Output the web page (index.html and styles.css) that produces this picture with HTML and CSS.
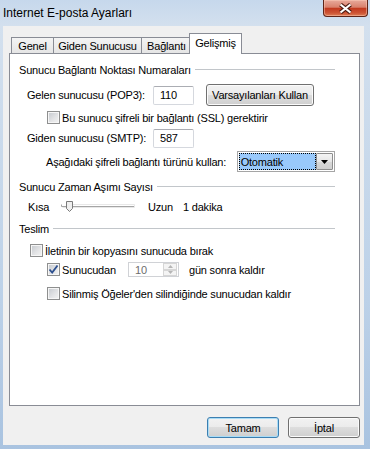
FILE: index.html
```html
<!DOCTYPE html>
<html lang="tr">
<head>
<meta charset="utf-8">
<title>Internet E-posta Ayarları</title>
<link rel="stylesheet" href="styles.css">
</head>
<body>
<div class="window">
  <div class="titlebar">
    <span class="title">Internet E-posta Ayarları</span>
    <div class="close">
      <svg width="15" height="11" viewBox="0 0 15 11"><path d="M2.5 1.5 L12.5 9.5 M12.5 1.5 L2.5 9.5" stroke="#4a1b12" stroke-width="4.2" fill="none"/><path d="M2.5 1.5 L12.5 9.5 M12.5 1.5 L2.5 9.5" stroke="#ffffff" stroke-width="2.2" fill="none"/></svg>
    </div>
  </div>
  <div class="client">
    <div class="tabs">
      <div class="tab w-genel">Genel</div>
      <div class="tab w-giden">Giden Sunucusu</div>
      <div class="tab w-baglanti">Bağlantı</div>
      <div class="tab tab-active w-gelismis">Gelişmiş</div>
    </div>
    <div class="panel">
      <div class="group-head hd1"><span>Sunucu Bağlantı Noktası Numaraları</span><i class="rule"></i></div>
      <div class="row r-pop">
        <span class="w-port">Gelen sunucusu (POP3):</span>
        <span class="textbox">110</span>
        <span class="btn btn-defaults">Varsayılanları Kullan</span>
      </div>
      <div class="row r-ssl">
        <span class="cb"></span><span class="cb-text">Bu sunucu şifreli bir bağlantı (SSL) gerektirir</span>
      </div>
      <div class="row r-smtp">
        <span class="w-port">Giden sunucusu (SMTP):</span>
        <span class="textbox">587</span>
      </div>
      <div class="row r-enc">
        <span class="w-enc">Aşağıdaki şifreli bağlantı türünü kullan:</span>
        <div class="combo">
          <span class="combo-val">Otomatik</span>
          <span class="combo-arrow"><svg width="7" height="4" viewBox="0 0 7 4"><path d="M0 0 H7 L3.5 4 Z" fill="#000"/></svg></span>
        </div>
      </div>
      <div class="group-head hd2"><span>Sunucu Zaman Aşımı Sayısı</span><i class="rule"></i></div>
      <div class="row r-slider">
        <span class="w-kisa">Kısa</span>
        <svg class="slider" width="87" height="14" viewBox="0 0 87 14">
          <path d="M0.5 4.5 V6.5 H73" stroke="#a5a5a5" fill="none"/>
          <path d="M1.5 7.5 H73.5 V4.5 H5" stroke="#e8e8e8" fill="none"/>
          <path d="M5.5 1.5 H11.5 V8.5 L8.5 11.5 L5.5 8.5 Z" fill="#efefef" stroke="#7a7a7a"/>
        </svg>
        <span class="w-uzun">Uzun</span>
        <span>1 dakika</span>
      </div>
      <div class="group-head hd3"><span>Teslim</span><i class="rule"></i></div>
      <div class="row r-keep">
        <span class="cb"></span><span class="cb-text">İletinin bir kopyasını sunucuda bırak</span>
      </div>
      <div class="row r-days">
        <span class="cb"><svg width="11" height="11" viewBox="0 0 11 11"><path d="M1.5 5.5 L4.2 8.5 L9.5 1.5" stroke="#2c4f8f" stroke-width="1.8" fill="none"/></svg></span>
        <span class="cb-text w-sunucudan">Sunucudan</span>
        <div class="spin">
          <span class="spin-val">10</span>
          <span class="spin-btns">
            <span class="spin-b"><svg width="5" height="3" viewBox="0 0 5 3"><path d="M0 3 H5 L2.5 0 Z" fill="#b5b5b5"/></svg></span>
            <span class="spin-b"><svg width="5" height="3" viewBox="0 0 5 3"><path d="M0 0 H5 L2.5 3 Z" fill="#b5b5b5"/></svg></span>
          </span>
        </div>
        <span class="after-spin">gün sonra kaldır</span>
      </div>
      <div class="row r-del">
        <span class="cb"></span><span class="cb-text">Silinmiş Öğeler'den silindiğinde sunucudan kaldır</span>
      </div>
    </div>
    <div class="actions">
      <span class="btn btn-action btn-default">Tamam</span>
      <span class="btn btn-action">İptal</span>
    </div>
  </div>
  <div class="annot"></div>
</div>
</body>
</html>
```
FILE: styles.css
```css
* { box-sizing: border-box; }
html, body { margin: 0; padding: 0; }
body {
  width: 370px;
  height: 449px;
  overflow: hidden;
  font-family: "Liberation Sans", Arial, sans-serif;
  font-size: 11px;
  color: #000;
  background: linear-gradient(180deg, #c6d8ec 0px, #d3e0ee 26px, #bcd1e8 300px, #a9c3e0 449px);
}
.window {
  position: relative;
  width: 370px;
  height: 449px;
  display: flex;
  flex-direction: column;
}
.titlebar {
  height: 26px;
  display: flex;
  align-items: flex-start;
  flex: none;
}
.title {
  font-size: 12px;
  line-height: 26px;
  padding-left: 3px;
  color: #000;
}
.close {
  margin-left: auto;
  margin-right: 2px;
  width: 45px;
  height: 17px;
  border: 1px solid #5e2418;
  border-top: none;
  border-radius: 0 0 4px 4px;
  background: linear-gradient(180deg, #e8aa9c 0%, #d9816d 45%, #c2391f 52%, #cc5334 80%, #de7d55 100%);
  box-shadow: inset 0 0 0 1px rgba(255, 210, 190, 0.45);
  display: flex;
  align-items: center;
  justify-content: center;
}
.client {
  margin-left: 3px;
  width: 361px;
  height: 419px;
  background: #f0f0f0;
  padding: 7px 4px 0 6px;
  display: flex;
  flex-direction: column;
  flex: none;
  letter-spacing: -0.2px;
}
.tabs {
  display: flex;
  align-items: flex-end;
  height: 21px;
  padding-left: 2px;
  flex: none;
}
.tab {
  height: 17px;
  border: 1px solid #898c95;
  border-bottom: none;
  background: linear-gradient(180deg, #f4f4f4, #e4e4e4);
  display: flex;
  align-items: center;
  justify-content: center;
  margin-left: -1px;
  padding-bottom: 1px;
  white-space: nowrap;
}
.tab:first-child { margin-left: 0; }
.w-genel { width: 43px; }
.w-giden { width: 89px; }
.w-baglanti { width: 51px; }
.w-gelismis { width: 53px; }
.tab-active {
  height: 21px;
  background: #fff;
  position: relative;
  z-index: 2;
  margin-left: -3px;
  padding-bottom: 2px;
}
.panel {
  position: relative;
  z-index: 1;
  margin-top: -1px;
  width: 351px;
  height: 353px;
  border: 1px solid #898c95;
  background: #fff;
  display: flex;
  flex-direction: column;
  padding: 9px 24px 0 0;
  flex: none;
}
.group-head {
  display: flex;
  align-items: center;
  height: 14px;
  padding-left: 9px;
  white-space: nowrap;
}
.group-head .rule {
  flex: 1;
  height: 1px;
  background: #c2c6ca;
  margin-left: 4px;
  margin-top: -1px;
}
.row {
  display: flex;
  align-items: center;
  white-space: nowrap;
}
.r-pop { margin-top: 7px; height: 22px; padding-left: 17px; }
.r-ssl { margin-top: 5px; height: 13px; padding-left: 37px; }
.r-smtp { margin-top: 4px; height: 20px; padding-left: 17px; }
.r-enc { margin-top: 3px; height: 21px; padding-left: 36px; }
.hd2 { margin-top: 8px; }
.r-slider { margin-top: 6px; height: 14px; padding-left: 18px; }
.hd3 { margin-top: 8px; }
.r-keep { margin-top: 8px; height: 13px; padding-left: 20px; }
.r-days { margin-top: 5px; height: 15px; padding-left: 37px; }
.r-del { margin-top: 10px; height: 13px; padding-left: 37px; }

.w-port { width: 126px; }
.w-enc { width: 192px; }
.w-kisa { width: 33px; }
.w-uzun { width: 35px; }
.w-sunucudan { width: 66px; }
.slider { display: block; flex: none; }

.textbox {
  width: 41px;
  height: 19px;
  border: 1px solid #d5d8de;
  border-top-color: #abadb3;
  border-radius: 2px;
  background: #fff;
  padding-left: 6px;
  display: flex;
  align-items: center;
}
.btn {
  display: flex;
  align-items: center;
  justify-content: center;
  border: 1px solid #707070;
  border-radius: 3px;
  background: linear-gradient(180deg, #f2f2f2 0%, #ebebeb 50%, #dddddd 50%, #cfcfcf 100%);
  box-shadow: inset 0 0 0 1px #fbfbfb;
  white-space: nowrap;
}
.btn-defaults {
  margin-left: 12px;
  width: 108px;
  height: 22px;
}
.cb {
  width: 13px;
  height: 13px;
  flex: none;
  border: 1px solid #8e8f8f;
  background: linear-gradient(135deg, #c4c8cd 0%, #e2e3e5 55%, #f4f4f4 100%);
  box-shadow: inset 0 0 0 1px #f6f6f6;
  display: flex;
  align-items: center;
  justify-content: center;
}
.cb-text { margin-left: 2px; }
.combo {
  width: 99px;
  height: 21px;
  border: 1px solid #a5a5a5;
  padding: 1px;
  display: flex;
  background: #fff;
}
.combo-val {
  flex: 1;
  background: #99c9fb;
  border: 1px dotted #000;
  display: flex;
  align-items: center;
  padding-left: 1px;
}
.combo-arrow {
  width: 17px;
  border: 1px solid #8d8d8d;
  border-radius: 1px;
  background: linear-gradient(180deg, #f4f4f4, #e6e6e6 50%, #d8d8d8 50%, #cfcfcf);
  display: flex;
  align-items: center;
  justify-content: center;
}
.spin {
  width: 51px;
  height: 15px;
  border: 1px solid #d0d2d6;
  display: flex;
  background: #fff;
  flex: none;
}
.spin-val {
  flex: 1;
  color: #6d6d6d;
  padding-left: 6px;
  display: flex;
  align-items: center;
}
.spin-btns {
  width: 15px;
  display: flex;
  flex-direction: column;
  padding: 0 1px 0 0;
}
.spin-b {
  flex: 1;
  border: 1px solid #d6d6d6;
  background: #f4f4f4;
  display: flex;
  align-items: center;
  justify-content: center;
}
.after-spin { margin-left: 10px; }
.actions {
  display: flex;
  justify-content: flex-end;
  gap: 9px;
  margin-top: 11px;
  flex: none;
}
.btn-action {
  width: 72px;
  height: 21px;
}
.btn-default {
  border-color: #3c7fb1;
  box-shadow: inset 0 0 0 1px #a9dcf6;
}
.annot {
  position: absolute;
  left: 221px;
  top: 132px;
  width: 130px;
  height: 61px;
  border: 5px solid #ed1c24;
}
```
